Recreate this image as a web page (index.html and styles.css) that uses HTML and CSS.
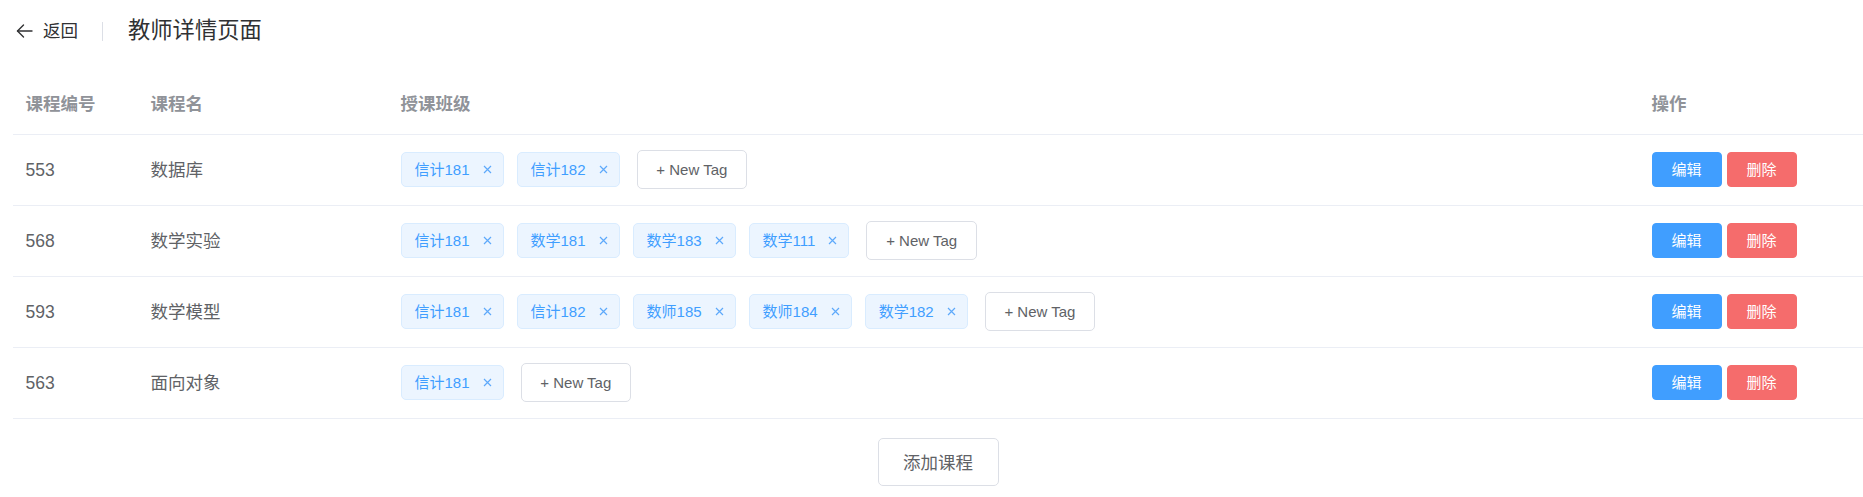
FILE: index.html
```html
<!DOCTYPE html>
<html lang="zh-CN">
<head>
<meta charset="utf-8">
<title>教师详情页面</title>
<link rel="stylesheet" href="styles.css">
</head>
<body>
<div class="page">
  <div class="page-header">
    <div class="back">
      <svg class="back-icon" width="17" height="16" viewBox="0 0 17 16" fill="none" stroke="#303133" stroke-width="1.4" stroke-linecap="round" stroke-linejoin="round"><path d="M1.5 8 H16"/><path d="M7.5 2 L1.5 8 L7.5 14"/></svg>
      <span class="back-text">返回</span>
    </div>
    <div class="divider"></div>
    <div class="title">教师详情页面</div>
  </div>

  <table class="course-table">
    <colgroup>
      <col class="c1"><col class="c2"><col class="c3"><col class="c4">
    </colgroup>
    <thead>
      <tr><th>课程编号</th><th>课程名</th><th>授课班级</th><th>操作</th></tr>
    </thead>
    <tbody>
      <tr>
        <td>553</td><td>数据库</td>
        <td><div class="tags">
          <span class="tag">信计181<svg class="x" width="9" height="9" viewBox="0 0 9 9"><path d="M1 1L8 8M8 1L1 8"/></svg></span>
          <span class="tag">信计182<svg class="x" width="9" height="9" viewBox="0 0 9 9"><path d="M1 1L8 8M8 1L1 8"/></svg></span>
          <button class="new-tag">+ New Tag</button>
        </div></td>
        <td><div class="ops"><button class="btn edit">编辑</button><button class="btn del">删除</button></div></td>
      </tr>
      <tr>
        <td>568</td><td>数学实验</td>
        <td><div class="tags">
          <span class="tag">信计181<svg class="x" width="9" height="9" viewBox="0 0 9 9"><path d="M1 1L8 8M8 1L1 8"/></svg></span>
          <span class="tag">数学181<svg class="x" width="9" height="9" viewBox="0 0 9 9"><path d="M1 1L8 8M8 1L1 8"/></svg></span>
          <span class="tag">数学183<svg class="x" width="9" height="9" viewBox="0 0 9 9"><path d="M1 1L8 8M8 1L1 8"/></svg></span>
          <span class="tag">数学111<svg class="x" width="9" height="9" viewBox="0 0 9 9"><path d="M1 1L8 8M8 1L1 8"/></svg></span>
          <button class="new-tag">+ New Tag</button>
        </div></td>
        <td><div class="ops"><button class="btn edit">编辑</button><button class="btn del">删除</button></div></td>
      </tr>
      <tr>
        <td>593</td><td>数学模型</td>
        <td><div class="tags">
          <span class="tag">信计181<svg class="x" width="9" height="9" viewBox="0 0 9 9"><path d="M1 1L8 8M8 1L1 8"/></svg></span>
          <span class="tag">信计182<svg class="x" width="9" height="9" viewBox="0 0 9 9"><path d="M1 1L8 8M8 1L1 8"/></svg></span>
          <span class="tag">数师185<svg class="x" width="9" height="9" viewBox="0 0 9 9"><path d="M1 1L8 8M8 1L1 8"/></svg></span>
          <span class="tag">数师184<svg class="x" width="9" height="9" viewBox="0 0 9 9"><path d="M1 1L8 8M8 1L1 8"/></svg></span>
          <span class="tag">数学182<svg class="x" width="9" height="9" viewBox="0 0 9 9"><path d="M1 1L8 8M8 1L1 8"/></svg></span>
          <button class="new-tag">+ New Tag</button>
        </div></td>
        <td><div class="ops"><button class="btn edit">编辑</button><button class="btn del">删除</button></div></td>
      </tr>
      <tr>
        <td>563</td><td>面向对象</td>
        <td><div class="tags">
          <span class="tag">信计181<svg class="x" width="9" height="9" viewBox="0 0 9 9"><path d="M1 1L8 8M8 1L1 8"/></svg></span>
          <button class="new-tag">+ New Tag</button>
        </div></td>
        <td><div class="ops"><button class="btn edit">编辑</button><button class="btn del">删除</button></div></td>
      </tr>
    </tbody>
  </table>

  <div class="footer">
    <button class="add-btn">添加课程</button>
  </div>
</div>
</body>
</html>
```

FILE: styles.css
```css
* { box-sizing: border-box; }
html, body {
  margin: 0;
  padding: 0;
  background: #fff;
}
body {
  font-family: "Liberation Sans", "Noto Sans CJK SC", sans-serif;
  color: #606266;
  overflow: hidden;
}
.page {
  padding-left: 13px;
  width: 1863px;
}
.page-header {
  display: flex;
  align-items: center;
  height: 30px;
  margin-top: 16px;
  padding-left: 3px;
}
.back {
  display: flex;
  align-items: center;
  color: #303133;
  font-size: 17.5px;
  line-height: 30px;
}
.back-icon {
  display: block;
  margin-right: 10px;
}
.divider {
  width: 1px;
  height: 19px;
  background: #DCDFE6;
  margin: 0 25px 0 24px;
}
.title {
  font-size: 22.3px;
  line-height: 30px;
  color: #303133;
}
.course-table {
  margin-top: 29px;
  width: 1850px;
  border-collapse: collapse;
  table-layout: fixed;
  font-size: 17.5px;
}
.c1 { width: 125px; }
.c2 { width: 250px; }
.c3 { width: 1251px; }
.c4 { width: 224px; }
th {
  text-align: left;
  font-weight: bold;
  color: #909399;
  padding: 15px 12.5px;
  line-height: 28px;
  height: 59px;
  border-bottom: 1px solid #EBEEF5;
}
td {
  padding: 15px 12.5px;
  line-height: 40px;
  height: 71px;
  border-bottom: 1px solid #EBEEF5;
  color: #606266;
  vertical-align: middle;
}
.tags {
  display: flex;
  align-items: center;
  height: 40px;
}
.tag {
  display: inline-flex;
  align-items: center;
  height: 35px;
  padding: 0 11px 0 13px;
  font-size: 15px;
  line-height: 33px;
  color: #409EFF;
  background: #ECF5FF;
  border: 1px solid #D9ECFF;
  border-radius: 5px;
  margin-left: 13px;
}
.tag:first-child { margin-left: 0; }
.tag .x {
  margin-left: 13px;
  stroke: #5DA9FB;
  stroke-width: 1.2;
  fill: none;
}
.new-tag {
  margin-left: 17px;
  height: 39px;
  padding: 0 18.75px;
  font-family: inherit;
  font-size: 15px;
  color: #606266;
  background: #fff;
  border: 1px solid #DCDFE6;
  border-radius: 5px;
  line-height: 37px;
}
.ops {
  display: flex;
  align-items: center;
  gap: 5px;
  height: 40px;
}
.btn {
  width: 70px;
  height: 35px;
  font-family: inherit;
  font-size: 15px;
  line-height: 33px;
  padding: 0;
  color: #fff;
  border-radius: 4px;
}
.edit { background: #409EFF; border: 1px solid #409EFF; }
.del { background: #F56C6C; border: 1px solid #F56C6C; }
.footer {
  display: flex;
  justify-content: center;
  width: 1850px;
  padding-top: 19px;
}
.add-btn {
  width: 121px;
  height: 48px;
  font-family: inherit;
  font-size: 17.5px;
  color: #606266;
  background: #fff;
  border: 1px solid #DCDFE6;
  border-radius: 5px;
  padding: 0;
}
```
